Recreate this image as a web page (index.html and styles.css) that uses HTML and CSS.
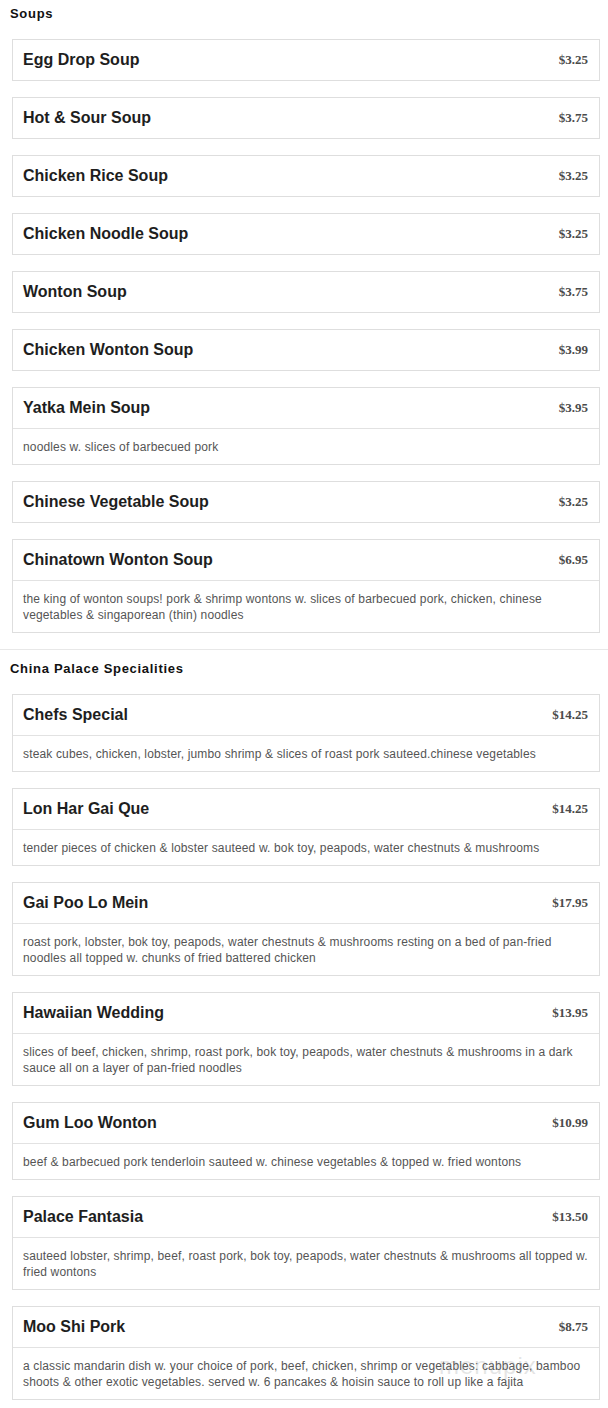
FILE: index.html
```html
<!DOCTYPE html>
<html lang="en">
<head>
  <meta charset="UTF-8">
  <title>China Palace Menu</title>
  <meta name="viewport" content="width=device-width, initial-scale=1.0">
  <link rel="stylesheet" href="styles.css">
</head>
<body>
  <!-- Soups -->
  <div class="section">
    <h2 class="section-title">Soups</h2>
    <div class="item">
      <div class="item-head"><span class="item-name">Egg Drop Soup</span><span class="price">$3.25</span></div>
    </div>
    <div class="item">
      <div class="item-head"><span class="item-name">Hot &amp; Sour Soup</span><span class="price">$3.75</span></div>
    </div>
    <div class="item">
      <div class="item-head"><span class="item-name">Chicken Rice Soup</span><span class="price">$3.25</span></div>
    </div>
    <div class="item">
      <div class="item-head"><span class="item-name">Chicken Noodle Soup</span><span class="price">$3.25</span></div>
    </div>
    <div class="item">
      <div class="item-head"><span class="item-name">Wonton Soup</span><span class="price">$3.75</span></div>
    </div>
    <div class="item">
      <div class="item-head"><span class="item-name">Chicken Wonton Soup</span><span class="price">$3.99</span></div>
    </div>
    <div class="item">
      <div class="item-head"><span class="item-name">Yatka Mein Soup</span><span class="price">$3.95</span></div>
      <p class="item-desc">noodles w. slices of barbecued pork</p>
    </div>
    <div class="item">
      <div class="item-head"><span class="item-name">Chinese Vegetable Soup</span><span class="price">$3.25</span></div>
    </div>
    <div class="item">
      <div class="item-head"><span class="item-name">Chinatown Wonton Soup</span><span class="price">$6.95</span></div>
      <p class="item-desc">the king of wonton soups! pork &amp; shrimp wontons w. slices of barbecued pork, chicken, chinese vegetables &amp; singaporean (thin) noodles</p>
    </div>
  </div>

  <!-- Specialities -->
  <div class="section">
    <h2 class="section-title">China Palace Specialities</h2>
    <div class="item">
      <div class="item-head"><span class="item-name">Chefs Special</span><span class="price">$14.25</span></div>
      <p class="item-desc">steak cubes, chicken, lobster, jumbo shrimp &amp; slices of roast pork sauteed.chinese vegetables</p>
    </div>
    <div class="item">
      <div class="item-head"><span class="item-name">Lon Har Gai Que</span><span class="price">$14.25</span></div>
      <p class="item-desc">tender pieces of chicken &amp; lobster sauteed w. bok toy, peapods, water chestnuts &amp; mushrooms</p>
    </div>
    <div class="item">
      <div class="item-head"><span class="item-name">Gai Poo Lo Mein</span><span class="price">$17.95</span></div>
      <p class="item-desc">roast pork, lobster, bok toy, peapods, water chestnuts &amp; mushrooms resting on a bed of pan-fried noodles all topped w. chunks of fried battered chicken</p>
    </div>
    <div class="item">
      <div class="item-head"><span class="item-name">Hawaiian Wedding</span><span class="price">$13.95</span></div>
      <p class="item-desc">slices of beef, chicken, shrimp, roast pork, bok toy, peapods, water chestnuts &amp; mushrooms in a dark sauce all on a layer of pan-fried noodles</p>
    </div>
    <div class="item">
      <div class="item-head"><span class="item-name">Gum Loo Wonton</span><span class="price">$10.99</span></div>
      <p class="item-desc">beef &amp; barbecued pork tenderloin sauteed w. chinese vegetables &amp; topped w. fried wontons</p>
    </div>
    <div class="item">
      <div class="item-head"><span class="item-name">Palace Fantasia</span><span class="price">$13.50</span></div>
      <p class="item-desc">sauteed lobster, shrimp, beef, roast pork, bok toy, peapods, water chestnuts &amp; mushrooms all topped w. fried wontons</p>
    </div>
    <div class="item item-last">
      <div class="item-head"><span class="item-name">Moo Shi Pork</span><span class="price">$8.75</span></div>
      <p class="item-desc">a classic mandarin dish w. your choice of pork, beef, chicken, shrimp or vegetables: cabbage, bamboo shoots &amp; other exotic vegetables. served w. 6 pancakes &amp; hoisin sauce to roll up like a fajita</p>
      <span class="watermark">menupix</span>
    </div>
  </div>
</body>
</html>
```

FILE: styles.css
```css
* {
  box-sizing: border-box;
  margin: 0;
  padding: 0;
}
body {
  font-family: "Liberation Sans", Arial, Helvetica, sans-serif;
  background: #fff;
  color: #222;
  width: 608px;
}
.section {
  padding-top: 5px;
}
.section + .section {
  border-top: 1px solid #e8e8e8;
  padding-top: 10px;
}
.section-title {
  font-size: 13px;
  line-height: 18px;
  font-weight: 700;
  letter-spacing: 0.7px;
  color: #111;
  margin: 0 10px 16px 10px;
}
.item {
  position: relative;
  margin: 0 8px 16px 12px;
  border: 1px solid #dedede;
  background: #fff;
}
.item-head {
  height: 40px;
  display: flex;
  align-items: center;
  justify-content: space-between;
  padding: 0 11px 0 10px;
}
.item-name {
  font-size: 16px;
  font-weight: 700;
  color: #1e1e1e;
}
.price {
  font-family: "Liberation Serif", "Times New Roman", serif;
  font-size: 13px;
  font-weight: 700;
  color: #4a4a4a;
}
.item-desc {
  border-top: 1px solid #e2e2e2;
  padding: 10px 9px 9px 10px;
  font-size: 12px;
  line-height: 16px;
  letter-spacing: 0.15px;
  color: #555;
}
/* watermark from the screenshot source */
.watermark {
  position: absolute;
  left: 426px;
  top: 45px;
  font-size: 24px;
  letter-spacing: 1px;
  color: rgba(150, 150, 150, 0.25);
  pointer-events: none;
}
```
